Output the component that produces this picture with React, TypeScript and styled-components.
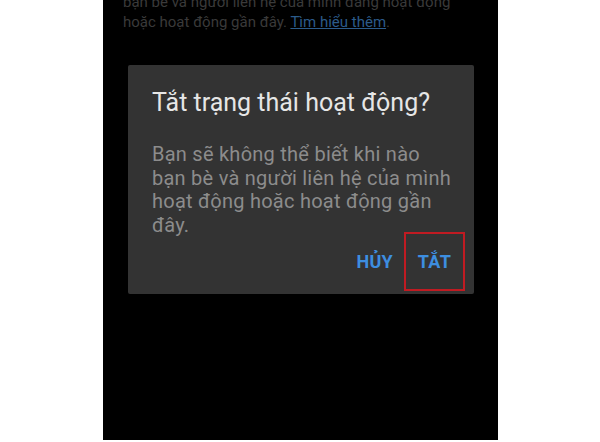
import { createGlobalStyle, styled } from "styled-components";

const GlobalStyle = createGlobalStyle`
  html, body {
    margin: 0;
    background: #ffffff;
  }
  body {
    font-family: Roboto, "Noto Sans", "Liberation Sans", sans-serif;
  }
`;

const Page = styled.div`
  width: 600px;
  height: 442px;
  display: flex;
  justify-content: center;
  padding-left: 1px;
  box-sizing: border-box;
`;

const Screen = styled.div`
  width: 395px;
  height: 440px;
  background: #000000;
  overflow: hidden;
  display: flex;
  flex-direction: column;
`;

const Intro = styled.p`
  margin: -8px 0 0;
  padding: 0 20px;
  font-size: 15px;
  line-height: 20px;
  color: #3a3a3a;
  a {
    color: #2c5b8a;
    text-decoration: underline;
  }
`;

const Dialog = styled.div`
  margin: 33px 0 0 25px;
  width: 346px;
  box-sizing: border-box;
  background: #333333;
  border-radius: 2px;
  padding: 23px 9px 3px 24px;
  display: flex;
  flex-direction: column;
`;

const Title = styled.h2`
  margin: 0;
  font-size: 25px;
  line-height: 30px;
  font-weight: 400;
  color: #e6e6e6;
`;

const Message = styled.p`
  margin: 25px 0 0;
  padding-right: 12px;
  font-size: 20px;
  line-height: 23.5px;
  letter-spacing: 0.25px;
  color: #8c8c8c;
`;

const Actions = styled.div`
  display: flex;
  justify-content: flex-end;
  align-items: center;
  gap: 11px;
  margin-top: -5px;
`;

const ActionButton = styled.button<{ $marked?: boolean }>`
  font-family: inherit;
  font-size: 18px;
  font-weight: 700;
  letter-spacing: 0.3px;
  color: #3d8ee0;
  background: none;
  padding: 0;
  display: flex;
  align-items: center;
  justify-content: center;
  height: 59px;
  width: ${(p) => (p.$marked ? "61px" : "auto")};
  box-sizing: border-box;
  border: ${(p) => (p.$marked ? "2px solid #c01b22" : "none")};
`;

export default function App() {
  return (
    <>
      <GlobalStyle />
      <Page>
        <Screen>
          <Intro>
            bạn bè và người liên hệ của mình đang hoạt động hoặc hoạt động gần
            đây. <a>Tìm hiểu thêm</a>.
          </Intro>
          <Dialog>
            <Title>Tắt trạng thái hoạt động?</Title>
            <Message>
              Bạn sẽ không thể biết khi nào bạn bè và người liên hệ của mình
              hoạt động hoặc hoạt động gần đây.
            </Message>
            <Actions>
              <ActionButton>HỦY</ActionButton>
              <ActionButton $marked>TẮT</ActionButton>
            </Actions>
          </Dialog>
        </Screen>
      </Page>
    </>
  );
}
